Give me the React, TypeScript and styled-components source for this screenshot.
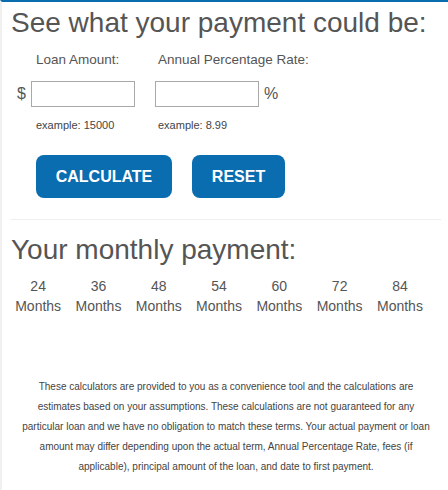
import React, { useState } from 'react'
import styled, { createGlobalStyle } from 'styled-components'

const GlobalStyle = createGlobalStyle`
  html, body {
    margin: 0;
    padding: 0;
    background: #fff;
  }
  body {
    font-family: 'Liberation Sans', Arial, sans-serif;
    color: #555;
  }
`

const terms = [24, 36, 48, 54, 60, 72, 84]

const disclaimerLines = [
  'These calculators are provided to you as a convenience tool and the calculations are',
  'estimates based on your assumptions. These calculations are not guaranteed for any',
  'particular loan and we have no obligation to match these terms. Your actual payment or loan',
  'amount may differ depending upon the actual term, Annual Percentage Rate, fees (if',
  'applicable), principal amount of the loan, and date to first payment.',
]

const App = () => {
  const [amount, setAmount] = useState('')
  const [rate, setRate] = useState('')

  const onReset = () => {
    setAmount('')
    setRate('')
  }

  return (
    <>
      <GlobalStyle />
      <Wrapper>
        <Title>See what your payment could be:</Title>
        <Fields>
          <Field>
            <Label $indent={25}>Loan Amount:</Label>
            <InputRow>
              <Unit>$</Unit>
              <Input value={amount} onChange={(e) => setAmount(e.target.value)} />
            </InputRow>
            <Hint $indent={25}>example: 15000</Hint>
          </Field>
          <Field>
            <Label $indent={3}>Annual Percentage Rate:</Label>
            <InputRow>
              <Input value={rate} onChange={(e) => setRate(e.target.value)} />
              <Unit $after>%</Unit>
            </InputRow>
            <Hint $indent={3}>example: 8.99</Hint>
          </Field>
        </Fields>
        <Buttons>
          <Button $width={136}>CALCULATE</Button>
          <Button $width={93} onClick={onReset}>
            RESET
          </Button>
        </Buttons>
        <Divider />
        <Subtitle>Your monthly payment:</Subtitle>
        <Terms>
          {terms.map((term) => (
            <Term key={term}>
              {term}
              <br />
              Months
            </Term>
          ))}
        </Terms>
        <Disclaimer>
          {disclaimerLines.map((line, index) => (
            <DisclaimerLine key={index}>{line}</DisclaimerLine>
          ))}
        </Disclaimer>
      </Wrapper>
    </>
  )
}

const Wrapper = styled.section`
  box-sizing: border-box;
  width: 448px;
  height: 490px;
  overflow: hidden;
  border-top: 2px solid #0a6db0;
  border-left: 2px solid #f0f0f0;
  padding: 0 7px 0 9px;
`

const Title = styled.h1`
  margin: 3px 0 0;
  font-size: 28px;
  font-weight: 400;
  line-height: 36px;
  color: #555;
  white-space: nowrap;
`

const Fields = styled.div`
  display: grid;
  grid-template-columns: 144px auto;
  margin-top: 9px;
`

const Field = styled.div`
  display: flex;
  flex-direction: column;
`

const Label = styled.div<{ $indent: number }>`
  font-size: 13.5px;
  line-height: 20px;
  padding-left: ${(p) => p.$indent}px;
  color: #555;
`

const InputRow = styled.div`
  display: flex;
  align-items: center;
  margin-top: 11px;
  height: 26px;
`

const Unit = styled.span<{ $after?: boolean }>`
  box-sizing: border-box;
  width: ${(p) => (p.$after ? 'auto' : '20px')};
  padding-left: ${(p) => (p.$after ? '5px' : '6px')};
  font-size: 16px;
  color: #555;
`

const Input = styled.input`
  box-sizing: border-box;
  width: 104px;
  height: 26px;
  border: 1px solid #a9a9a9;
  border-radius: 0;
  padding: 2px 4px;
  font-family: inherit;
  font-size: 14px;
  outline: none;
`

const Hint = styled.div<{ $indent: number }>`
  font-size: 11px;
  line-height: 14px;
  margin-top: 11px;
  padding-left: ${(p) => p.$indent}px;
  color: #444;
`

const Buttons = styled.div`
  display: flex;
  gap: 20px;
  margin-top: 23px;
  padding-left: 25px;
`

const Button = styled.button<{ $width: number }>`
  width: ${(p) => p.$width}px;
  height: 43px;
  border: none;
  border-radius: 8px;
  background: #0a6db0;
  color: #fff;
  font-family: 'Liberation Sans', Arial, sans-serif;
  font-size: 16px;
  font-weight: 700;
  cursor: pointer;
`

const Divider = styled.hr`
  border: none;
  border-top: 1px solid #eee;
  margin: 21px 0 0;
`

const Subtitle = styled.h2`
  margin: 14px 0 0;
  font-size: 28px;
  font-weight: 400;
  line-height: 32px;
  color: #555;
`

const Terms = styled.div`
  display: grid;
  grid-template-columns: repeat(7, 60.3px);
  margin-left: -3px;
  margin-top: 10px;
`

const Term = styled.div`
  text-align: center;
  font-size: 14px;
  line-height: 20px;
  color: #555;
`

const Disclaimer = styled.div`
  margin-top: 61px;
  text-align: center;
  font-size: 10px;
  line-height: 20px;
  color: #444;
`

const DisclaimerLine = styled.div`
  white-space: nowrap;
`

export default App
